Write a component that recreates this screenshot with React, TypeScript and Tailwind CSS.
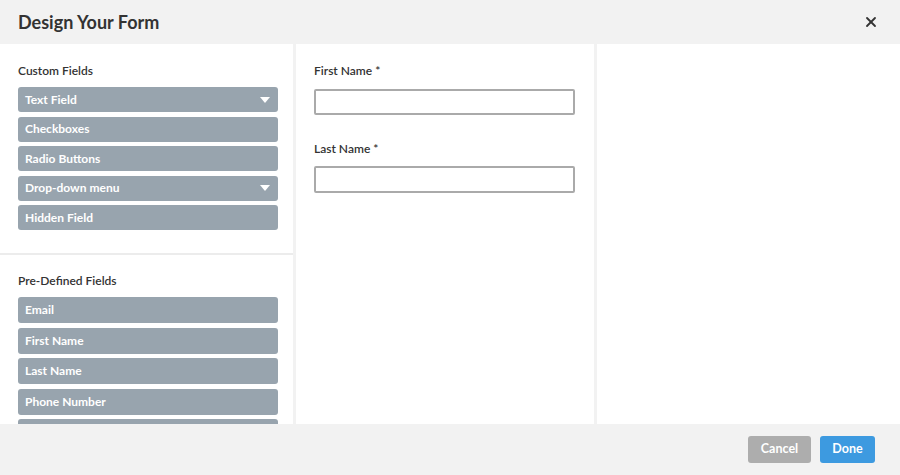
import { X } from 'lucide-react';

const customFields = [
  { label: 'Text Field', caret: true },
  { label: 'Checkboxes' },
  { label: 'Radio Buttons' },
  { label: 'Drop-down menu', caret: true },
  { label: 'Hidden Field' },
];

// last item is scrolled under the footer, only its top edge shows
const predefinedFields = ['Email', 'First Name', 'Last Name', 'Phone Number', ''];

function FieldButton({ label, caret, tall }: { label: string; caret?: boolean; tall?: boolean }) {
  return (
    <div
      className={`flex shrink-0 items-center justify-between rounded-[3px] bg-[#98a4ae] px-[7px] text-[12px] font-bold leading-[16px] text-white ${
        tall ? 'h-[26px]' : 'h-[25px]'
      }`}
    >
      <span>{label}</span>
      {caret && (
        <svg width="10" height="6" viewBox="0 0 10 6" className="mr-[1px]">
          <path d="M0 0h10L5 6z" fill="#fff" />
        </svg>
      )}
    </div>
  );
}

export default function App() {
  return (
    <div
      className="flex h-[475px] w-[900px] flex-col overflow-hidden bg-white text-[#333]"
      style={{ fontFamily: 'Lato, "Noto Sans", sans-serif' }}
    >
      <div className="flex h-[44px] shrink-0 items-center justify-between bg-[#f2f2f2] pl-[18px] pr-[21px]">
        <h1 className="text-[18px] font-bold text-[#333]">Design Your Form</h1>
        <X size={16} strokeWidth={2.75} className="text-[#333]" />
      </div>

      <div className="flex min-h-0 flex-1">
        <div className="flex w-[293px] flex-col overflow-hidden">
          <div className="pl-[18px] pr-[15px] pt-[19px] pb-[23px]">
            <h2 className="mb-[8px] text-[12px] font-semibold leading-[16px] text-[#333]">Custom Fields</h2>
            <div className="flex flex-col gap-[4.5px]">
              {customFields.map((f) => (
                <FieldButton key={f.label} label={f.label} caret={f.caret} />
              ))}
            </div>
          </div>
          <div className="h-[2px] shrink-0 bg-[#ececec]" />
          <div className="pl-[18px] pr-[15px] pt-[18px]">
            <h2 className="mb-[8px] text-[12px] font-semibold leading-[16px] text-[#333]">Pre-Defined Fields</h2>
            <div className="flex flex-col gap-[4.5px]">
              {predefinedFields.map((f, i) => (
                <FieldButton key={i} label={f} tall />
              ))}
            </div>
          </div>
        </div>

        <div className="w-[3px] bg-[#f2f2f2]" />

        <div className="w-[298px] px-[18px] pt-[19px]">
          <label className="block text-[12px] font-semibold leading-[16px] text-[#333]">First Name *</label>
          <div className="mt-[10px] h-[26px] w-[261px] rounded-[2px] border-2 border-[#aaaaaa]" />
          <label className="mt-[26px] block text-[12px] font-semibold leading-[16px] text-[#333]">Last Name *</label>
          <div className="mt-[9px] h-[27px] w-[261px] rounded-[2px] border-2 border-[#aaaaaa]" />
        </div>

        <div className="w-[3px] bg-[#f2f2f2]" />

        <div className="flex-1" />
      </div>

      <div className="flex h-[51px] shrink-0 items-center justify-end gap-[9px] bg-[#f2f2f2] pr-[25px]">
        <button className="h-[27px] w-[63px] rounded-[3px] bg-[#adadad] text-[12.5px] font-bold text-white">
          Cancel
        </button>
        <button className="h-[27px] w-[55px] rounded-[3px] bg-[#3d9ae0] text-[12.5px] font-bold text-white">
          Done
        </button>
      </div>
    </div>
  );
}
